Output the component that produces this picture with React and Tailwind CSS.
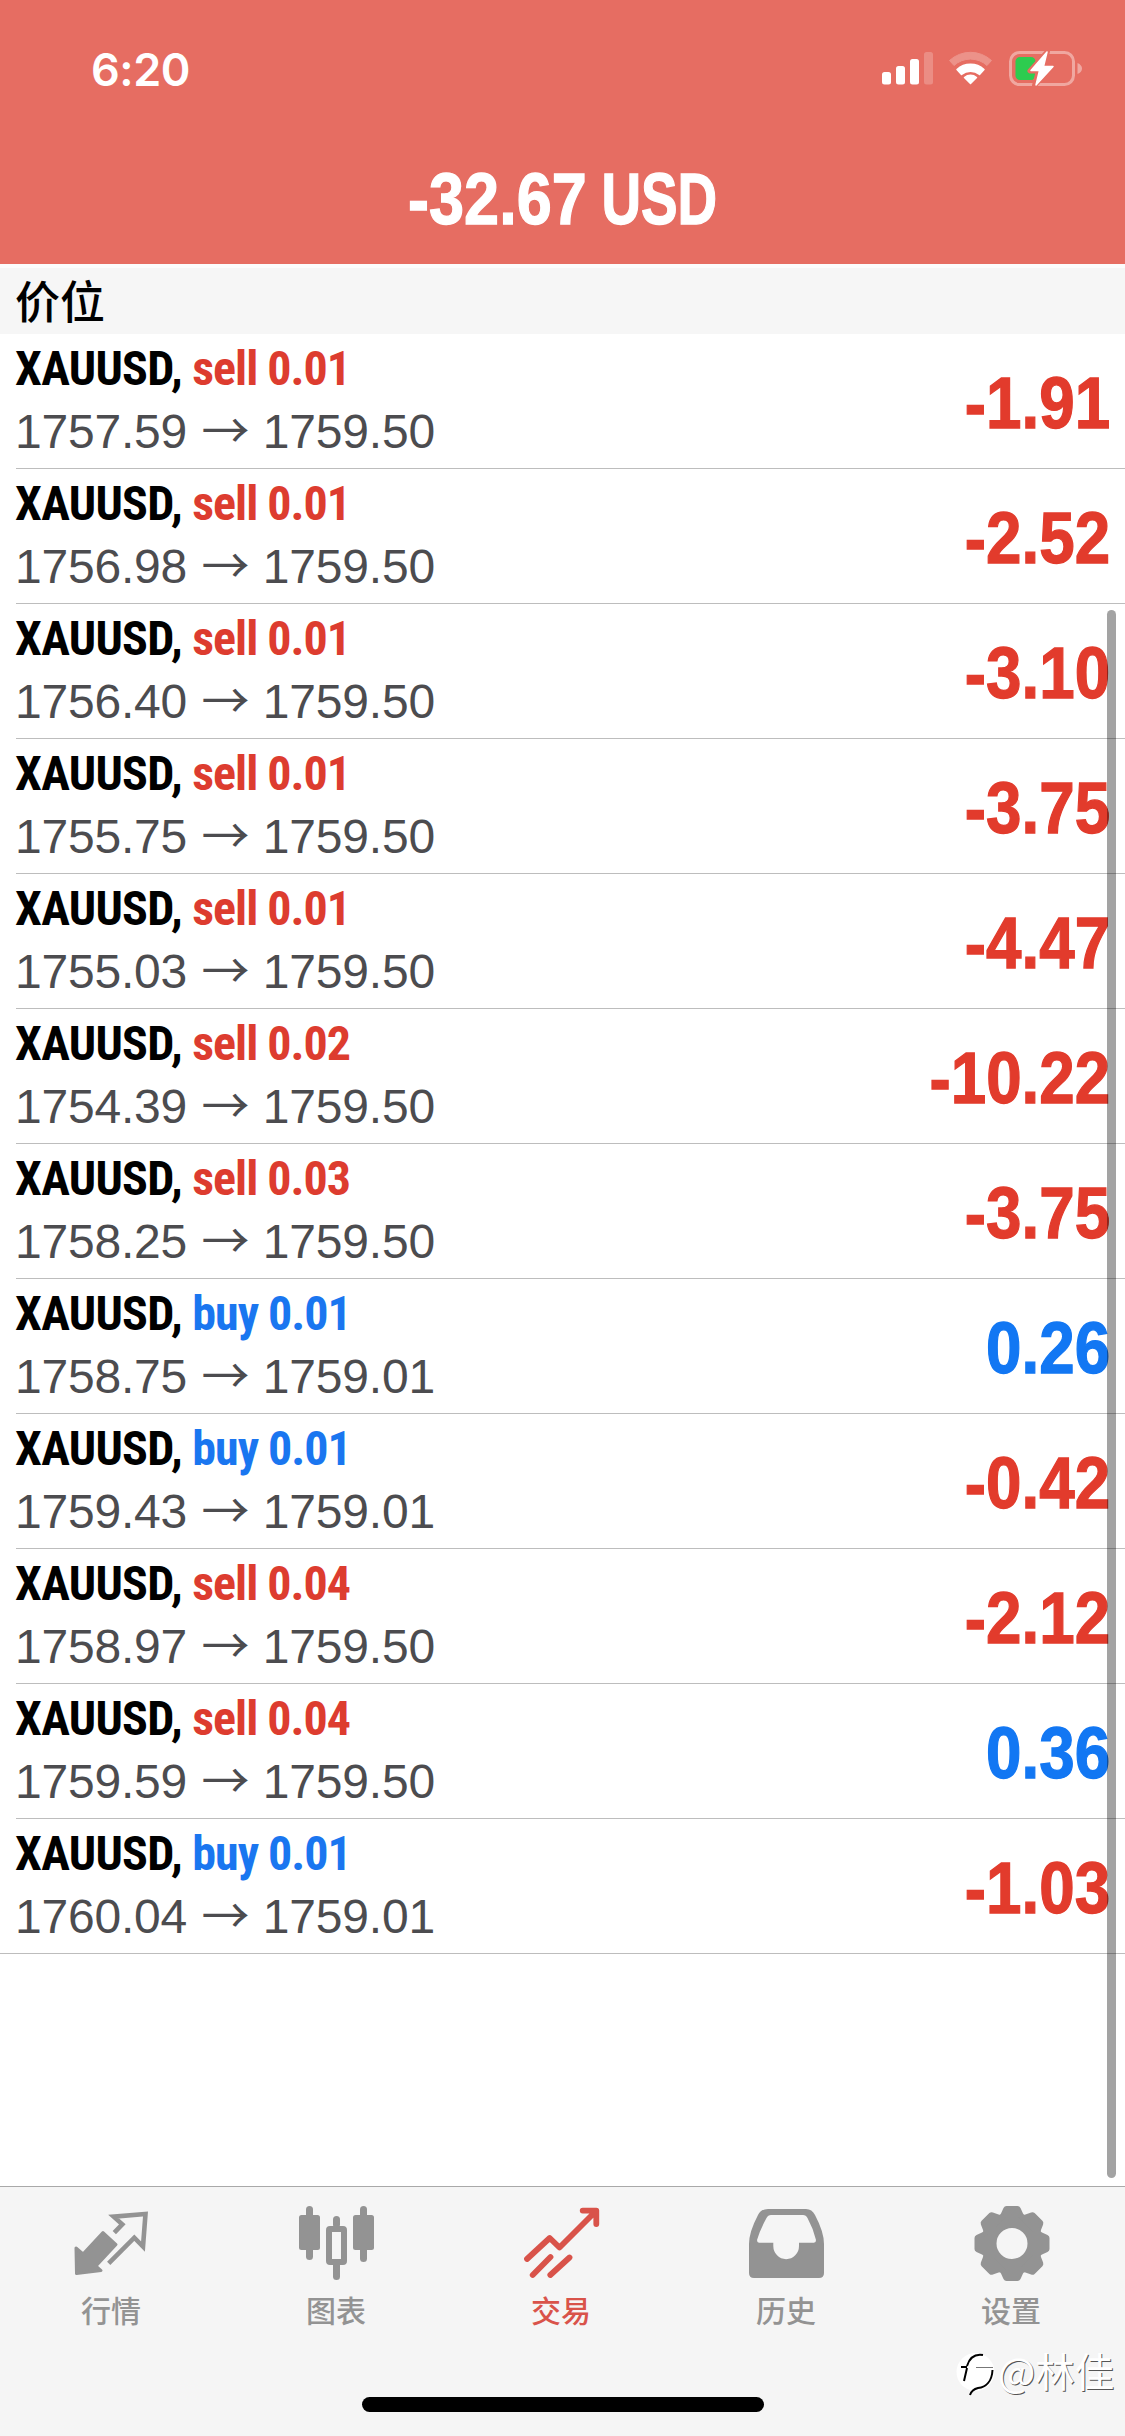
import React from "react";

const positions = [
  { side: "sell", volume: "0.01", open: "1757.59", current: "1759.50", profit: "-1.91" },
  { side: "sell", volume: "0.01", open: "1756.98", current: "1759.50", profit: "-2.52" },
  { side: "sell", volume: "0.01", open: "1756.40", current: "1759.50", profit: "-3.10" },
  { side: "sell", volume: "0.01", open: "1755.75", current: "1759.50", profit: "-3.75" },
  { side: "sell", volume: "0.01", open: "1755.03", current: "1759.50", profit: "-4.47" },
  { side: "sell", volume: "0.02", open: "1754.39", current: "1759.50", profit: "-10.22" },
  { side: "sell", volume: "0.03", open: "1758.25", current: "1759.50", profit: "-3.75" },
  { side: "buy", volume: "0.01", open: "1758.75", current: "1759.01", profit: "0.26" },
  { side: "buy", volume: "0.01", open: "1759.43", current: "1759.01", profit: "-0.42" },
  { side: "sell", volume: "0.04", open: "1758.97", current: "1759.50", profit: "-2.12" },
  { side: "sell", volume: "0.04", open: "1759.59", current: "1759.50", profit: "0.36" },
  { side: "buy", volume: "0.01", open: "1760.04", current: "1759.01", profit: "-1.03" }
];

const StatusIcons = () => (
  <svg width="200" height="36" viewBox="0 0 200 36" fill="#fff">
    {/* Signal */}
    <rect x="0" y="21" width="9" height="12.5" rx="2.5" />
    <rect x="14" y="15" width="9" height="18.5" rx="2.5" />
    <rect x="28" y="8" width="9" height="25.5" rx="2.5" />
    <rect x="42" y="1" width="9" height="32.5" rx="2.5" opacity="0.22" />

    {/* Wifi */}
    <path
      d="M67.5 9.5 A31 31 0 0 1 109.5 9.5 L105 14.5 A24.5 24.5 0 0 0 72 14.5 Z"
      opacity="0.25"
      stroke="#fff"
      strokeWidth="1"
      strokeLinejoin="round"
    />
    <path
      d="M75 18.5 A20 20 0 0 1 102 18.5 L97.5 23.5 A14.5 14.5 0 0 0 79.5 23.5 Z"
      stroke="#fff"
      strokeWidth="1.5"
      strokeLinejoin="round"
    />
    <path
      d="M82.5 26.5 A9.5 9.5 0 0 1 94.5 26.5 L88.5 32.5 Z"
      stroke="#fff"
      strokeWidth="1.5"
      strokeLinejoin="round"
    />

    {/* Battery */}
    <rect x="128.5" y="1.5" width="63" height="32" rx="9" fill="none" stroke="#fff" strokeWidth="3" opacity="0.4" />
    <path d="M195.5 12 Q200 14 200 17.5 Q200 21 195.5 23 Z" opacity="0.4" />
    <rect x="133.5" y="6" width="20" height="23" rx="4.5" fill="#2dcc4f" />
    <path
      d="M165.5 0.5 L148 20 H156.5 L152.5 34.5 L171 15 H161.5 Z"
      stroke="#e66d62"
      strokeWidth="5"
      strokeLinejoin="round"
    />
    <path
      d="M165 1 L149 19.5 H157.5 L154 34 L171 15.5 H161.5 Z"
      stroke="#fff"
      strokeWidth="1.5"
      strokeLinejoin="round"
    />
  </svg>
);

const QuotesIcon = () => (
  <>
    <path
      d="M1 42 L8 48 L28 26.5 L41 38.5 L21 60 L26 64.5 L1.5 67.5 Z"
      fill="currentColor"
      stroke="currentColor"
      strokeWidth="3"
      strokeLinejoin="round"
    />
    <path
      d="M39.3 26.7 L47.3 18.3 L38.7 10.7 L70.5 8 L68 40.5 L59.3 31.7 L33.7 57.3"
      fill="none"
      stroke="currentColor"
      strokeWidth="4.6"
    />
  </>
);

const ChartsIcon = () => (
  <g fill="currentColor">
    <rect x="-1" y="9" width="21" height="35" rx="2.5" />
    <rect x="6" y="0" width="7" height="54" rx="3.5" />
    <rect x="33" y="10" width="7" height="12" rx="3.5" />
    <rect x="33" y="55" width="7" height="19" rx="3.5" />
    <rect x="29" y="23" width="15" height="33" rx="1" fill="none" stroke="currentColor" strokeWidth="6" strokeLinejoin="round" />
    <rect x="53" y="9" width="21" height="35" rx="2.5" />
    <rect x="60" y="0" width="7" height="56" rx="3.5" />
  </g>
);

const TradeIcon = () => (
  <path
    d="M2 53 L24.7 32 L34.5 41.5 L71 5 M57.7 4.6 H71.3 V18 M7.7 69 L25.5 51 M25.3 69 L44.5 51.5"
    fill="none"
    stroke="currentColor"
    strokeWidth="5.8"
    strokeLinecap="round"
    strokeLinejoin="round"
  />
);

const HistoryIcon = () => (
  <path
    d="M18 3 H56 Q62 3 65 9 Q74 26 74 38 V67 Q74 72 69 72 H4 Q-1 72 -1 67 V38 Q-1 26 8 9 Q11 3 18 3 Z M21 9 Q18 9 16.5 12 Q10 24 7 34 Q7 36.7 9 36.7 H23.3 V40 A12.7 13 0 0 0 49 40 V36.7 H64 Q66 36.7 66 34 Q63 22 57.5 12 Q56 9 53 9 Z"
    fill="currentColor"
    fillRule="evenodd"
  />
);

const SettingsIcon = () => (
  <g fill="currentColor">
    <circle cx="37" cy="37.5" r="22" fill="none" stroke="currentColor" strokeWidth="13" />
    {[0, 45, 90, 135, 180, 225, 270, 315].map((angle) => (
      <path
        key={angle}
        d="M31.5 0 H42.5 Q44.5 0 45.5 2 L48 7.5 Q49 9.5 51 10.5 V14 H23 V10.5 Q25 9.5 26 7.5 L28.5 2 Q29.5 0 31.5 0 Z"
        transform={`rotate(${angle} 37 37.5)`}
      />
    ))}
  </g>
);

const tabs = [
  { label: "行情", Icon: QuotesIcon },
  { label: "图表", Icon: ChartsIcon },
  { label: "交易", Icon: TradeIcon, active: true },
  { label: "历史", Icon: HistoryIcon },
  { label: "设置", Icon: SettingsIcon }
];

const PositionRow = ({ position, last }) => {
  const { side, volume, open, current, profit } = position;

  return (
    <li className={`h-[135px] ${last ? "border-b border-[#bdbdbd]" : "pl-4"}`}>
      <div
        className={`flex h-full items-center justify-between pr-[15px] ${
          last ? "pl-4" : "border-b border-[#bdbdbd]"
        }`}
      >
        <div className="-ml-px pb-0.5 whitespace-pre">
          <p className="h-[63px] text-[48px] leading-[63px] font-bold font-['Roboto_Condensed','Liberation_Sans',sans-serif]">
            <span className="tracking-[-0.7px] text-black">XAUUSD, </span>
            <span className={`tracking-[-1px] ${side === "buy" ? "text-[#1a76f0]" : "text-[#dd3c2f]"}`}>
              {side} {volume}
            </span>
          </p>
          <p className="h-[63px] text-[48px] leading-[63px] text-[#4c4c4f]">
            <span className="tracking-[-0.2px]">{open}</span>{" "}
            <span className="ml-px font-['Noto_Sans_CJK_SC',sans-serif] leading-none">→</span>{" "}
            <span className="tracking-[-0.2px]">{current}</span>
          </p>
        </div>
        <span
          className={`origin-right scale-x-[0.885] pt-[3px] text-[72px] leading-none font-bold [-webkit-text-stroke:1.3px_currentColor] ${
            profit.startsWith("-") ? "text-[#e23b2c]" : "text-[#1277f3]"
          }`}
        >
          {profit}
        </span>
      </div>
    </li>
  );
};

const App = () => {
  return (
    <div className="relative flex h-[2436px] w-[1125px] flex-col overflow-hidden bg-white font-['Liberation_Sans','Noto_Sans_CJK_SC',sans-serif]">
      {/* Status bar and balance */}
      <header className="h-[264px] shrink-0 bg-[#e66d62] text-white">
        <div className="flex h-[132px] items-center justify-between pt-[6px] pr-[43px] pl-[91px]">
          <span className="text-[45px] leading-none font-semibold tracking-[-0.5px] font-['Inter',sans-serif]">6:20</span>
          <StatusIcons />
        </div>
        <div className="flex h-[132px] items-center justify-center pt-px">
          <h1 className="scale-x-[0.875] text-[72px] leading-none font-bold whitespace-nowrap [-webkit-text-stroke:1.3px_currentColor]">
            <span>-32.67</span>
            <span className="-mr-[20px] ml-[17px] inline-block origin-left scale-x-[0.87]">USD</span>
          </h1>
        </div>
      </header>

      <div className="flex h-[70px] shrink-0 items-center border-t-4 border-[#fcfcfc] bg-[#f6f6f6] pb-[3px] pl-[15px]">
        <h2 className="text-[45px] leading-none font-medium text-black font-['Noto_Sans_CJK_SC',sans-serif]">价位</h2>
      </div>

      <ul className="flex-1">
        {positions.map((position, i) => (
          <PositionRow key={i} position={position} last={i === positions.length - 1} />
        ))}
      </ul>

      {/* Scroll indicator */}
      <div className="absolute top-[610px] left-[1107px] h-[1568px] w-[9px] rounded-full bg-black/36"></div>

      {/* Tab bar */}
      <nav className="flex h-[250px] shrink-0 flex-col border-t border-[#a9a9a9] bg-[#f5f5f5]">
        <div className="grid flex-1 grid-cols-5">
          {tabs.map(({ label, Icon, active }) => (
            <div
              key={label}
              className={`flex flex-col items-center pt-[19px] ${active ? "text-[#d9534a]" : "text-[#939393]"}`}
            >
              <svg width="75" height="75" viewBox="0 0 75 75" className="overflow-visible">
                <Icon />
              </svg>
              <span className="mt-[13px] mr-[3px] text-[30px] leading-none font-medium font-['Noto_Sans_CJK_SC',sans-serif]">
                {label}
              </span>
            </div>
          ))}
        </div>
        <div className="mb-6 h-[15px] w-[402px] self-center rounded-full bg-black"></div>
      </nav>

      {/* Watermark */}
      <div className="absolute top-[2350px] left-[956px] flex items-center text-white">
        <svg width="42" height="50" viewBox="0 0 42 50" fill="none">
          <path d="M20 3 A19 19 0 1 1 19 41 A19 19 0 0 1 20 3 Z" fill="#fff" />
          <path d="M8 31 L11 18 M5 17 H11 M11 16 C14 6 21 4 27 5" stroke="#000" strokeWidth="2" />
          <path d="M20 17.5 H37" stroke="#777" strokeWidth="1" />
          <path d="M36.5 20 C36 31 30 37 22 38 C18 39 15 42 14 45" stroke="#000" strokeWidth="2" />
        </svg>
        <span className="-mt-2.5 text-[39.5px] leading-none whitespace-nowrap [text-shadow:1px_1px_0_#555] font-['Noto_Sans_CJK_SC',sans-serif]">
          @林佳
        </span>
      </div>
    </div>
  );
};

export default App;
